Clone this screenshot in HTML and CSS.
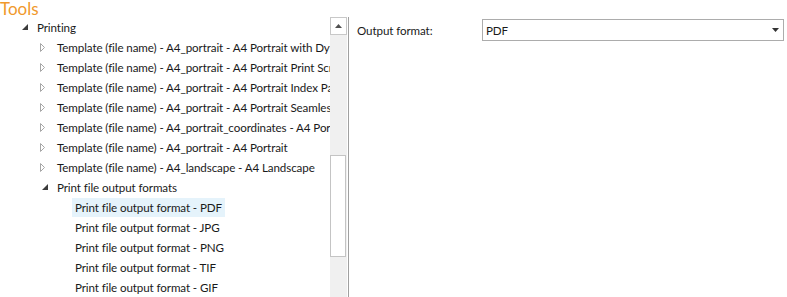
FILE: index.html
```html
<!DOCTYPE html>
<html lang="en">

<head>
  <meta charset="UTF-8">
  <title>Tools</title>
  <link rel="stylesheet" href="styles.css">
</head>

<body>

  <div class="title">Tools</div>

  <div class="main">
    <!-- Tree -->
    <div class="tree-pane">
      <div class="tree">
        <div class="row l1">
          <span class="exp"><svg class="open" width="6" height="6" viewBox="0 0 6 6"><polygon points="6,0 6,6 0,6" /></svg></span>
          <span class="label">Printing</span>
        </div>
        <div class="row l2">
          <span class="exp"><svg class="closed" width="6" height="9" viewBox="0 0 6 9"><polygon points="0.5,0.5 4.5,4.5 0.5,8.5" /></svg></span>
          <span class="label">Template (file name) - A4_portrait - A4 Portrait with Dynamic Legend</span>
        </div>
        <div class="row l2">
          <span class="exp"><svg class="closed" width="6" height="9" viewBox="0 0 6 9"><polygon points="0.5,0.5 4.5,4.5 0.5,8.5" /></svg></span>
          <span class="label">Template (file name) - A4_portrait - A4 Portrait Print Screen</span>
        </div>
        <div class="row l2">
          <span class="exp"><svg class="closed" width="6" height="9" viewBox="0 0 6 9"><polygon points="0.5,0.5 4.5,4.5 0.5,8.5" /></svg></span>
          <span class="label">Template (file name) - A4_portrait - A4 Portrait Index Page</span>
        </div>
        <div class="row l2">
          <span class="exp"><svg class="closed" width="6" height="9" viewBox="0 0 6 9"><polygon points="0.5,0.5 4.5,4.5 0.5,8.5" /></svg></span>
          <span class="label">Template (file name) - A4_portrait - A4 Portrait Seamless</span>
        </div>
        <div class="row l2">
          <span class="exp"><svg class="closed" width="6" height="9" viewBox="0 0 6 9"><polygon points="0.5,0.5 4.5,4.5 0.5,8.5" /></svg></span>
          <span class="label">Template (file name) - A4_portrait_coordinates - A4 Portrait Coordinates</span>
        </div>
        <div class="row l2">
          <span class="exp"><svg class="closed" width="6" height="9" viewBox="0 0 6 9"><polygon points="0.5,0.5 4.5,4.5 0.5,8.5" /></svg></span>
          <span class="label">Template (file name) - A4_portrait - A4 Portrait</span>
        </div>
        <div class="row l2">
          <span class="exp"><svg class="closed" width="6" height="9" viewBox="0 0 6 9"><polygon points="0.5,0.5 4.5,4.5 0.5,8.5" /></svg></span>
          <span class="label">Template (file name) - A4_landscape - A4 Landscape</span>
        </div>
        <div class="row l2">
          <span class="exp"><svg class="open" width="6" height="6" viewBox="0 0 6 6"><polygon points="6,0 6,6 0,6" /></svg></span>
          <span class="label">Print file output formats</span>
        </div>
        <div class="row l3">
          <span class="label selected">Print file output format - PDF</span>
        </div>
        <div class="row l3">
          <span class="label">Print file output format - JPG</span>
        </div>
        <div class="row l3">
          <span class="label">Print file output format - PNG</span>
        </div>
        <div class="row l3">
          <span class="label">Print file output format - TIF</span>
        </div>
        <div class="row l3">
          <span class="label">Print file output format - GIF</span>
        </div>
      </div>
    </div>

    <!-- Scrollbar -->
    <div class="scrollbar">
      <div class="scroll-btn"><svg width="7" height="4" viewBox="0 0 7 4"><polygon points="0,4 3.5,0 7,4" /></svg></div>
      <div class="scroll-thumb"></div>
    </div>

    <!-- Properties -->
    <div class="props">
      <div class="prop-row">
        <span class="prop-name">Output format:</span>
        <div class="select">
          <span>PDF</span>
          <svg width="7" height="4" viewBox="0 0 7 4"><polygon points="0,0 7,0 3.5,4" /></svg>
        </div>
      </div>
    </div>
  </div>

</body>

</html>
```

FILE: styles.css
```css
body {
  margin: 0;
  font-family: Lato, "Noto Sans", sans-serif;
  font-size: 11.6px;
  letter-spacing: -0.1px;
  color: #1a1a1a;
  background-color: #fff;
  overflow: hidden;
}

.title {
  height: 17px;
  line-height: 17px;
  font-size: 17px;
  letter-spacing: 0;
  color: #f0992c;
}

.main {
  display: flex;
  height: 280px;
}

.tree-pane {
  width: 330px;
  overflow: hidden;
}

.row {
  display: flex;
  align-items: center;
  height: 20px;
  white-space: nowrap;
}

.row.l1 {
  padding-left: 20px;
}

.row.l2 {
  padding-left: 40px;
}

.row.l3 {
  padding-left: 72px;
}

.exp {
  width: 17px;
  flex: none;
  display: flex;
  align-items: center;
}

.exp .open {
  margin-left: 2px;
  fill: #3c3c3c;
}

.exp .closed {
  fill: none;
  stroke: #a6a6a6;
  stroke-width: 1;
}

.label {
  line-height: 17px;
}

.row.l3 .label {
  padding: 0 2px;
  border: 1px solid transparent;
}

.label.selected {
  background-color: #e5f3fb;
  border-color: #a5d6f5;
}

.scrollbar {
  width: 17px;
  flex: none;
  background-color: #f0f0f0;
}

.scroll-btn {
  height: 18px;
  box-sizing: border-box;
  border: 1px solid #c8c8c8;
  background-color: #fff;
  display: flex;
  align-items: center;
  justify-content: center;
  fill: #505050;
}

.scroll-thumb {
  margin-top: 120px;
  height: 102px;
  width: 16px;
  box-sizing: border-box;
  border: 1px solid #c4c4c4;
  background-color: #fff;
}

.props {
  flex: 1;
  border-left: 1px solid #a0a0a0;
  margin-left: 1px;
  padding: 2px 3px 0 8px;
}

.prop-row {
  display: flex;
  align-items: center;
}

.prop-name {
  width: 125px;
}

.select {
  flex: 1;
  height: 22px;
  box-sizing: border-box;
  border: 1px solid #acacac;
  display: flex;
  align-items: center;
  justify-content: space-between;
  padding: 0 4px 0 3px;
  fill: #333;
}
```
